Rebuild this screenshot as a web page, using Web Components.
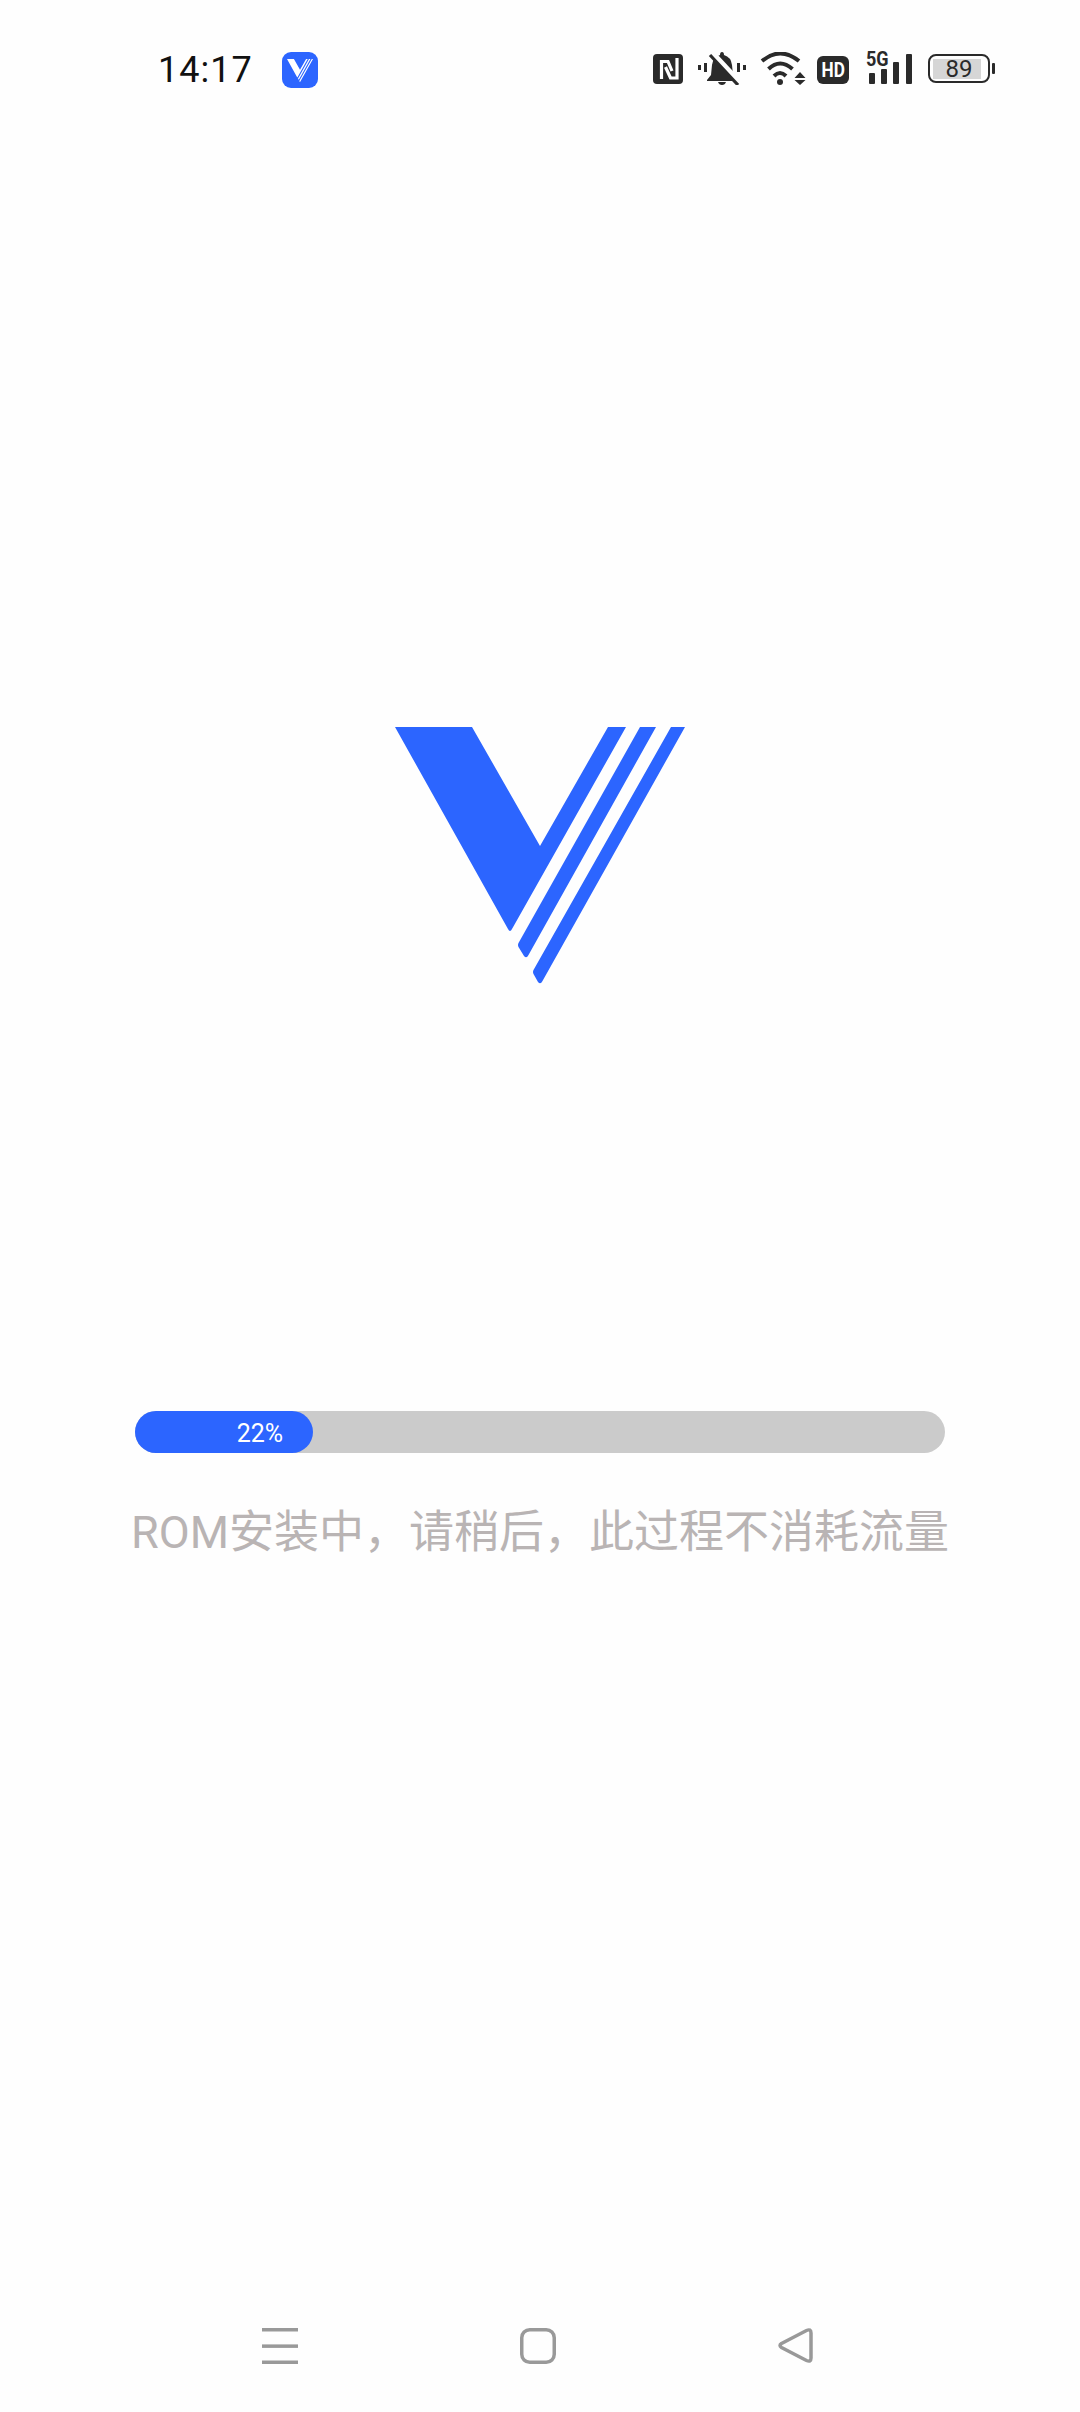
<!DOCTYPE html>
<html lang="zh">
<head>
<meta charset="utf-8">
<title>ROM</title>
<style>
    html, body {
        margin: 0;
        background: #fefefe;
    }
</style>
</head>
<body>
<install-page></install-page>
<script>
const BLUE = "#2c65ff";
const INK = "#2a2a2a";
const V_PATHS = `
    <path d="M395 727H472L540 846L608 727H626L512 929Q510 933 508 929Z"/>
    <path d="M640 727H656L528.500 955Q526.500 959 524 956L518.500 947Q517.500 945 518.500 943Z"/>
    <path d="M671 727H685L542.500 981Q540.500 985 538 982L533.500 974Q532.500 972 533.500 970Z"/>`;

class StatusBar extends HTMLElement {
    constructor() {
        super();
        this.attachShadow({ mode: "open" });
        this.shadowRoot.innerHTML = `
            <style>
                :host {
                    display: flex;
                    align-items: flex-start;
                    height: 90px;
                    padding: 52px 84px 0 158px;
                    box-sizing: border-box;
                    font-family: Roboto, "Noto Sans", sans-serif;
                }
                .time {
                    font-size: 36px;
                    line-height: 36px;
                    width: 94px;
                    letter-spacing: 1px;
                    color: #111;
                    white-space: nowrap;
                }
                .app {
                    margin-left: 30px;
                    width: 36px;
                    height: 36px;
                    border-radius: 9px;
                    background: ${BLUE};
                    display: flex;
                    align-items: center;
                    justify-content: center;
                }
                .icons {
                    margin-left: auto;
                    display: flex;
                    align-items: flex-start;
                }
                svg { display: block; }
                .hd {
                    margin: 4px 0 0 11px;
                    width: 32px;
                    height: 28px;
                    border-radius: 6px;
                    background: ${INK};
                    color: #fff;
                    font-size: 21px;
                    font-weight: 700;
                    line-height: 28px;
                    text-align: center;
                    white-space: nowrap;
                }
                .hd span {
                    display: inline-block;
                    transform: scaleX(0.82);
                }
                .signal {
                    margin-left: 17px;
                    display: grid;
                    width: 46px;
                    height: 33px;
                }
                .signal > * { grid-area: 1 / 1; }
                .signal span {
                    color: ${INK};
                    font-size: 20px;
                    font-weight: 700;
                    line-height: 15px;
                    transform: scaleX(0.9);
                    transform-origin: left top;
                    white-space: nowrap;
                }
                .battery {
                    margin-left: 16px;
                    display: grid;
                    width: 68px;
                    height: 33px;
                }
                .battery > * { grid-area: 1 / 1; }
                .battery span {
                    width: 62px;
                    color: ${INK};
                    font-size: 24px;
                    line-height: 35px;
                    text-align: center;
                }
            </style>
            <div class="time">14:17</div>
            <div class="app">
                <svg width="26" height="23" viewBox="395 727 290 256" fill="#fff">${V_PATHS}</svg>
            </div>
            <div class="icons">
                <!-- nfc -->
                <svg width="30" height="33" viewBox="0 0 30 33">
                    <rect y="2" width="30" height="30" rx="4" fill="${INK}"/>
                    <path d="M8.500 27V9.500H15L19 19M12.500 15L17.500 26H24V6" fill="none" stroke="#fff" stroke-width="3.200"/>
                </svg>
                <!-- muted bell -->
                <svg width="48" height="33" viewBox="0 0 48 33" style="margin-left:15px" fill="${INK}">
                    <rect x="0" y="13" width="3" height="5"/>
                    <rect x="6" y="11" width="3" height="9"/>
                    <rect x="39" y="11" width="3" height="9"/>
                    <rect x="45" y="13" width="3" height="5"/>
                    <path d="M24 0Q26 0 26 3Q33 5 34 13L35 23L39 28V29H9V28L13 23L14 13Q15 5 22 3Q22 0 24 0Z"/>
                    <path d="M20 30H28Q27 33 24 33Q21 33 20 30Z"/>
                    <path d="M14 1L42 31" stroke="#fefefe" stroke-width="6"/>
                    <path d="M12 3L40 33" stroke="${INK}" stroke-width="3.200"/>
                </svg>
                <!-- wifi -->
                <svg width="46" height="33" viewBox="0 0 46 33" style="margin-left:14px" fill="none">
                    <path d="M2 9Q20 -6 39 9" stroke="${INK}" stroke-width="4"/>
                    <path d="M8.500 17Q20 6 32.500 17" stroke="${INK}" stroke-width="4"/>
                    <path d="M14 24Q20 18 26 24" stroke="${INK}" stroke-width="4"/>
                    <circle cx="20" cy="30" r="3" fill="${INK}"/>
                    <path d="M34.500 26L40 20L45.500 26ZM34.500 28H45.500L40 33Z" fill="${INK}"/>
                </svg>
                <div class="hd"><span>HD</span></div>
                <div class="signal">
                    <span>5G</span>
                    <svg width="46" height="33" viewBox="0 0 46 33" fill="${INK}">
                        <rect x="3" y="21" width="6" height="11" rx="1"/>
                        <rect x="15" y="17" width="6" height="15" rx="1"/>
                        <rect x="27" y="10" width="6" height="22" rx="1"/>
                        <rect x="40" y="2" width="6" height="30" rx="1"/>
                    </svg>
                </div>
                <div class="battery">
                    <svg width="68" height="33" viewBox="0 0 68 33">
                        <rect x="1" y="3" width="60" height="27" rx="7" fill="none" stroke="${INK}" stroke-width="2"/>
                        <rect x="5" y="7" width="48" height="20" fill="#d6d6d6"/>
                        <rect x="64" y="11" width="3" height="11" rx="1" fill="${INK}"/>
                    </svg>
                    <span>89</span>
                </div>
            </div>
        `;
    }
}

class BrandLogo extends HTMLElement {
    constructor() {
        super();
        this.attachShadow({ mode: "open" });
        this.shadowRoot.innerHTML = `
            <style>
                :host {
                    display: flex;
                    justify-content: center;
                }
                svg { display: block; }
            </style>
            <svg width="290" height="257" viewBox="395 727 290 257" fill="${BLUE}">${V_PATHS}</svg>
        `;
    }
}

class ProgressBar extends HTMLElement {
    constructor() {
        super();
        this.attachShadow({ mode: "open" });
        const value = this.getAttribute("value");
        this.shadowRoot.innerHTML = `
            <style>
                :host {
                    display: block;
                    width: 810px;
                    height: 42px;
                    border-radius: 21px;
                    background: #cbcbcb;
                    font-family: Roboto, sans-serif;
                }
                .fill {
                    display: flex;
                    align-items: center;
                    justify-content: flex-end;
                    box-sizing: border-box;
                    width: ${value}%;
                    height: 100%;
                    padding: 2px 30px 0 0;
                    border-radius: 21px;
                    background: ${BLUE};
                    color: #fff;
                    font-size: 25px;
                }
            </style>
            <div class="fill">${value}%</div>
        `;
    }
}

class NavBar extends HTMLElement {
    constructor() {
        super();
        this.attachShadow({ mode: "open" });
        this.shadowRoot.innerHTML = `
            <style>
                :host {
                    display: flex;
                    gap: 222px;
                    padding: 0 0 48px 262px;
                }
                svg { display: block; }
            </style>
            <svg width="36" height="36" viewBox="0 0 36 36" fill="#999">
                <rect y="0" width="36" height="3.500"/>
                <rect y="16.400" width="36" height="3.500"/>
                <rect y="32.500" width="36" height="3.500"/>
            </svg>
            <svg width="36" height="36" viewBox="0 0 36 36" fill="none" stroke="#999" stroke-width="3.500">
                <rect x="1.750" y="1.750" width="32.500" height="32.500" rx="8"/>
            </svg>
            <svg width="36" height="36" viewBox="0 0 36 36" fill="none" stroke="#999" stroke-width="3.500">
                <path d="M3.500 15.500L28.500 2.500Q33 0.500 33 5V30Q33 34.500 28.500 32.500L3.500 19.500Q0.500 17.500 3.500 15.500Z"/>
            </svg>
        `;
    }
}

class InstallPage extends HTMLElement {
    constructor() {
        super();
        this.attachShadow({ mode: "open" });
        this.shadowRoot.innerHTML = `
            <style>
                :host {
                    display: flex;
                    flex-direction: column;
                    height: 2412px;
                    background: #fefefe;
                }
                brand-logo { margin-top: 637px; }
                .progress {
                    display: flex;
                    flex-direction: column;
                    align-items: center;
                    margin-top: 427px;
                }
                .message {
                    margin-top: 48px;
                    font-family: Roboto, "Noto Sans CJK SC", sans-serif;
                    font-size: 45px;
                    line-height: 64px;
                    color: #b9b4b4;
                    white-space: nowrap;
                }
                nav-bar { margin-top: auto; }
            </style>
            <status-bar></status-bar>
            <brand-logo></brand-logo>
            <div class="progress">
                <progress-bar value="22"></progress-bar>
                <div class="message">ROM安装中，请稍后，此过程不消耗流量</div>
            </div>
            <nav-bar></nav-bar>
        `;
    }
}

customElements.define("status-bar", StatusBar);
customElements.define("brand-logo", BrandLogo);
customElements.define("progress-bar", ProgressBar);
customElements.define("nav-bar", NavBar);
customElements.define("install-page", InstallPage);
</script>
</body>
</html>
